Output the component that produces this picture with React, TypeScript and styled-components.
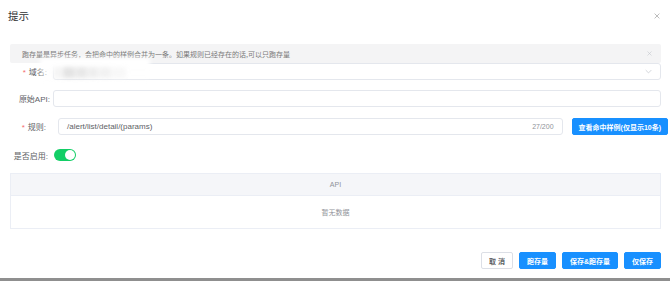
import React from 'react';
import styled, { createGlobalStyle } from 'styled-components';

const GlobalStyle = createGlobalStyle`
  html, body {
    margin: 0;
    padding: 0;
    background: #fff;
  }
  body {
    font-family: "Liberation Sans", "Noto Sans CJK SC", sans-serif;
    color: #606266;
  }
`;

const Dialog = styled.div`
  width: 670px;
  height: 281px;
  display: flex;
  flex-direction: column;
  overflow: hidden;
  background: #fff;
`;

const Header = styled.div`
  height: 32px;
  padding: 0 10px 0 8px;
  display: flex;
  align-items: center;
  justify-content: space-between;
`;

const Title = styled.div`
  font-size: 10.5px;
  color: #303133;
  font-family: "Noto Sans CJK SC", sans-serif;
`;

const CloseIcon = ({ size, color }: { size: number; color: string }) => (
  <svg width={size} height={size} viewBox="0 0 10 10">
    <path d="M1 1 L9 9 M9 1 L1 9" stroke={color} strokeWidth="1.1" fill="none" />
  </svg>
);

const Body = styled.div`
  margin: 13px 9px 0 10px;
  display: flex;
  flex-direction: column;
`;

const Alert = styled.div`
  height: 19px;
  background: #f4f4f5;
  border-radius: 2px;
  display: flex;
  align-items: center;
  justify-content: space-between;
  padding: 0 9px 0 12px;
  font-size: 7px;
  color: #7a7a7a;
  font-family: "Noto Sans CJK SC", sans-serif;
`;

const FormRow = styled.div<{ $mt: number; $h: number; $mr?: number }>`
  display: flex;
  align-items: center;
  margin-top: ${(p) => p.$mt}px;
  margin-right: ${(p) => p.$mr ?? 0}px;
  height: ${(p) => p.$h}px;
`;

const Label = styled.div<{ $w: number; $pr: number }>`
  width: ${(p) => p.$w}px;
  padding-right: ${(p) => p.$pr}px;
  box-sizing: border-box;
  text-align: right;
  flex-shrink: 0;
  font-size: 8px;
  color: #606266;
  font-family: "Liberation Sans", "Noto Sans CJK SC", sans-serif;
  white-space: nowrap;
`;

const Star = styled.span`
  color: #f56c6c;
  margin-right: 3px;
`;

const Field = styled.div`
  flex: 1;
  height: 100%;
  box-sizing: border-box;
  border: 1px solid #e4e7ed;
  border-radius: 3px;
  background: #fff;
  display: flex;
  align-items: center;
  justify-content: space-between;
  padding: 0 8px;
  position: relative;
  font-size: 8px;
  color: #606266;
`;

const Counter = styled.span`
  font-size: 7px;
  color: #909399;
`;

const Redact = styled.div`
  position: absolute;
  left: -14px;
  top: -6px;
  width: 110px;
  height: 24px;
  filter: blur(2px);
  display: flex;
  align-items: center;
  gap: 1px;
  padding: 5px 0 0 14px;
  box-sizing: border-box;
  background: linear-gradient(180deg, #ffffff 0%, #ffffff 30%, rgba(255, 255, 255, 0) 100%);
`;

const RedactBlock = styled.div<{ $w: number; $c: string }>`
  width: ${(p) => p.$w}px;
  height: 11px;
  background: ${(p) => p.$c};
`;

const PrimaryButton = styled.button<{ $ml?: number; $px?: number }>`
  flex-shrink: 0;
  height: 17px;
  padding: 0 ${(p) => p.$px ?? 7}px;
  margin-left: ${(p) => p.$ml ?? 0}px;
  border: 1px solid #1890ff;
  background: #1890ff;
  color: #fff;
  border-radius: 2px;
  font-size: 7px;
  font-weight: bold;
  font-family: "Liberation Sans", "Noto Sans CJK SC", sans-serif;
  white-space: nowrap;
  cursor: pointer;
`;

const DefaultButton = styled(PrimaryButton)`
  border-color: #dcdfe6;
  background: #fff;
  color: #606266;
`;

const Switch = styled.div`
  width: 22px;
  height: 12px;
  border-radius: 6px;
  background: #13ce66;
  display: flex;
  align-items: center;
  justify-content: flex-end;
  padding: 0 1px;
  box-sizing: border-box;
`;

const Knob = styled.div`
  width: 10px;
  height: 10px;
  border-radius: 50%;
  background: #fff;
`;

const Table = styled.div`
  margin-top: 12px;
  border: 1px solid #ebeef5;
  font-size: 7px;
  color: #909399;
  font-family: "Liberation Sans", "Noto Sans CJK SC", sans-serif;
`;

const TableHead = styled.div`
  height: 21px;
  background: #f5f6f9;
  border-bottom: 1px solid #ebeef5;
  display: flex;
  align-items: center;
  justify-content: center;
`;

const TableEmpty = styled.div`
  height: 32px;
  display: flex;
  align-items: center;
  justify-content: center;
`;

const Footer = styled.div`
  margin-top: 23px;
  display: flex;
  justify-content: flex-end;
  gap: 6px;
`;

const BottomStrip = styled.div`
  margin-top: 9px;
  height: 3px;
  background: #8f8f8f;
`;

export default function App() {
  return (
    <Dialog>
      <GlobalStyle />
      <Header>
        <Title>提示</Title>
        <CloseIcon size={6} color="#9a9a9a" />
      </Header>
      <Body>
        <Alert>
          <span>跑存量是异步任务，会把命中的样例合并为一条。如果规则已经存在的话,可以只跑存量</span>
          <CloseIcon size={5} color="#c0c4cc" />
        </Alert>
        <FormRow $mt={0} $h={17}>
          <Label $w={43} $pr={6}>
            <Star>*</Star>域名:
          </Label>
          <Field>
            <Redact>
              <RedactBlock $w={8} $c="#f4f4f4" />
              <RedactBlock $w={12} $c="#e4e4e4" />
              <RedactBlock $w={11} $c="#e8e8e8" />
              <RedactBlock $w={10} $c="#eeeeee" />
              <RedactBlock $w={12} $c="#f2f2f2" />
              <RedactBlock $w={14} $c="#f8f8f8" />
            </Redact>
            <span />
            <svg width="7" height="5" viewBox="0 0 10 6">
              <path d="M1 1 L5 5 L9 1" stroke="#c0c4cc" strokeWidth="1" fill="none" />
            </svg>
          </Field>
        </FormRow>
        <FormRow $mt={10} $h={17}>
          <Label $w={43} $pr={3}>原始API:</Label>
          <Field />
        </FormRow>
        <FormRow $mt={11} $h={17} $mr={-7}>
          <Label $w={48} $pr={12}>
            <Star>*</Star>规则:
          </Label>
          <Field>
            <span>/alert/list/detail/(params)</span>
            <Counter>27/200</Counter>
          </Field>
          <PrimaryButton $ml={9} $px={6}>查看命中样例(仅显示10条)</PrimaryButton>
        </FormRow>
        <FormRow $mt={14} $h={12}>
          <Label $w={44} $pr={6}>是否启用:</Label>
          <Switch>
            <Knob />
          </Switch>
        </FormRow>
        <Table>
          <TableHead>API</TableHead>
          <TableEmpty>暂无数据</TableEmpty>
        </Table>
        <Footer>
          <DefaultButton>取 消</DefaultButton>
          <PrimaryButton>跑存量</PrimaryButton>
          <PrimaryButton>保存&amp;跑存量</PrimaryButton>
          <PrimaryButton>仅保存</PrimaryButton>
        </Footer>
      </Body>
      <BottomStrip />
    </Dialog>
  );
}
